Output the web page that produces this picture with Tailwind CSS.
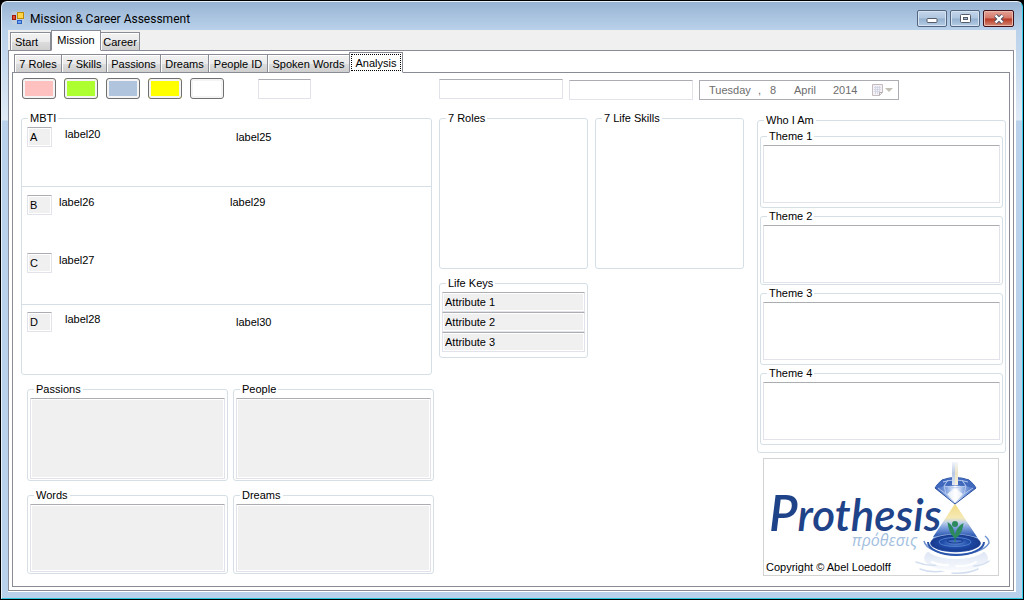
<!DOCTYPE html>
<html lang="en">
<head>
<meta charset="utf-8">
<title>Mission &amp; Career Assessment</title>
<script src="https://cdn.jsdelivr.net/npm/@tailwindcss/browser@4"></script>
</head>
<body class="bg-black font-['Liberation_Sans',sans-serif] text-[11px] leading-[14px] text-black">
<div class="min-h-screen flex flex-col p-px">
<div class="flex-1 flex flex-col rounded-t-[6px] border border-t-[#e8f1fa] border-l-[#e8f1fa] border-r-[#35d0ee] border-b-[#2cc4dc] bg-[linear-gradient(to_bottom,#98b4d3_0px,#b9d1ea_28px,#dfeaf6_118px,#b9d1ea_119px)] px-[6px] pb-[6px]">

  <header class="h-7 flex items-start pl-[3px] pr-[2px]">
    <svg class="mt-[9px] w-[14px] h-[14px]" viewBox="0 0 14 14" aria-hidden="true">
      <rect x="0.5" y="0.5" width="13" height="13" fill="#c9d2d8" opacity=".6"/>
      <rect x="6.5" y="1.5" width="6" height="6" fill="#ffd447" stroke="#c08a00"/>
      <rect x="1.5" y="4.5" width="3" height="4" fill="#e0502c" stroke="#a01808"/>
      <rect x="6.5" y="9.5" width="4" height="3" fill="#6ea6f5" stroke="#2a5fc4"/>
    </svg>
    <h1 class="ml-[5px] mt-[9px] flex-1 font-[Roboto,sans-serif] text-[12px] leading-4">Mission &amp; Career Assessment</h1>
    <div class="mt-2 flex gap-[3px]">
      <button aria-label="Minimize" class="w-[30px] h-[17px] rounded-[2px] border border-[#536580] bg-[linear-gradient(to_bottom,#c3d6ea_0%,#afc6df_48%,#93b0cf_52%,#b5cde6_100%)] shadow-[inset_0_0_0_1px_#d6e4f2] flex items-center justify-center">
        <svg width="12" height="11" viewBox="0 0 12 11"><rect x="1" y="5.5" width="10" height="4" rx="1" fill="#fff" stroke="#555b68"/></svg>
      </button>
      <button aria-label="Maximize" class="w-[30px] h-[17px] rounded-[2px] border border-[#536580] bg-[linear-gradient(to_bottom,#c3d6ea_0%,#afc6df_48%,#93b0cf_52%,#b5cde6_100%)] shadow-[inset_0_0_0_1px_#d6e4f2] flex items-center justify-center">
        <svg width="11" height="9" viewBox="0 0 11 9"><rect x=".5" y=".5" width="10" height="8" rx="1" fill="#fff" stroke="#555b68"/><rect x="3.5" y="3.5" width="4" height="2" fill="#9fb8d4" stroke="#555b68"/></svg>
      </button>
      <button aria-label="Close" class="w-[31px] h-[17px] rounded-[2px] border border-[#43101a] bg-[linear-gradient(to_bottom,#e5a295_0%,#d4786a_48%,#b83622_52%,#d28a75_100%)] shadow-[inset_0_0_0_1px_#eab9ad] flex items-center justify-center">
        <svg width="12" height="10" viewBox="0 0 12 10"><path d="M2.5 1.5 L9.5 8.5 M9.5 1.5 L2.5 8.5" stroke="#4d5364" stroke-width="4.2"/><path d="M2.5 1.5 L9.5 8.5 M9.5 1.5 L2.5 8.5" stroke="#fff" stroke-width="2.4"/></svg>
      </button>
    </div>
  </header>

  <main class="flex-1 flex flex-col bg-[#f0f0f0]">
    <nav class="relative z-10 flex items-end pl-[2px] -mb-px h-[21px]" aria-label="Main sections">
      <button class="h-[19px] w-[41px] pr-2 border border-[#898c95] bg-[linear-gradient(to_bottom,#f2f2f2_0%,#ebebeb_50%,#dddddd_51%,#cfcfcf_100%)] shadow-[inset_1px_1px_0_#fff]">Start</button>
      <button class="h-[21px] w-[50px] pb-[2px] border border-[#898c95] border-b-white bg-white">Mission</button>
      <button class="h-[19px] w-[39px] border border-l-0 border-[#898c95] bg-[linear-gradient(to_bottom,#f2f2f2_0%,#ebebeb_50%,#dddddd_51%,#cfcfcf_100%)] shadow-[inset_1px_1px_0_#fff]">Career</button>
    </nav>

    <div class="flex-1 flex flex-col bg-white pr-[2px] pb-px">
    <div class="flex-1 flex flex-col border border-[#898c95] p-[3px] pt-px">
      <nav class="relative z-10 flex items-end pl-[2px] -mb-px h-[21px]" aria-label="Mission pages">
        <button class="h-[19px] w-12 border border-[#898c95] bg-[linear-gradient(to_bottom,#f2f2f2_0%,#ebebeb_50%,#dddddd_51%,#cfcfcf_100%)] shadow-[inset_1px_1px_0_#fff]">7 Roles</button>
        <button class="h-[19px] w-[45px] border border-l-0 border-[#898c95] bg-[linear-gradient(to_bottom,#f2f2f2_0%,#ebebeb_50%,#dddddd_51%,#cfcfcf_100%)] shadow-[inset_1px_1px_0_#fff]">7 Skills</button>
        <button class="h-[19px] w-[54px] border border-l-0 border-[#898c95] bg-[linear-gradient(to_bottom,#f2f2f2_0%,#ebebeb_50%,#dddddd_51%,#cfcfcf_100%)] shadow-[inset_1px_1px_0_#fff]">Passions</button>
        <button class="h-[19px] w-12 border border-l-0 border-[#898c95] bg-[linear-gradient(to_bottom,#f2f2f2_0%,#ebebeb_50%,#dddddd_51%,#cfcfcf_100%)] shadow-[inset_1px_1px_0_#fff]">Dreams</button>
        <button class="h-[19px] w-[59px] border border-l-0 border-[#898c95] bg-[linear-gradient(to_bottom,#f2f2f2_0%,#ebebeb_50%,#dddddd_51%,#cfcfcf_100%)] shadow-[inset_1px_1px_0_#fff]">People ID</button>
        <button class="h-[19px] w-[81px] border border-x-0 border-[#898c95] bg-[linear-gradient(to_bottom,#f2f2f2_0%,#ebebeb_50%,#dddddd_51%,#cfcfcf_100%)] shadow-[inset_1px_1px_0_#fff]">Spoken Words</button>
        <button class="h-[21px] w-[54px] p-px border border-[#898c95] border-b-white bg-white"><span class="block h-[17px] leading-[16px] border border-dotted border-black">Analysis</span></button>
      </nav>

      <section class="flex-1 border border-[#898c95] bg-white pl-2 pr-[3px] pt-[5px] pb-[10px]">
        <div class="grid grid-cols-[413fr_567fr] gap-[5px]">
          <div class="flex items-start gap-2 pl-px">
            <button aria-label="Pink" class="w-[34px] h-[21px] rounded-[3px] border border-[#707070] bg-[#ffc0c0] shadow-[inset_0_0_0_2px_#f4f4f4]"></button>
            <button aria-label="Green" class="w-[34px] h-[21px] rounded-[3px] border border-[#707070] bg-[#adff2f] shadow-[inset_0_0_0_2px_#f4f4f4]"></button>
            <button aria-label="Blue" class="w-[34px] h-[21px] rounded-[3px] border border-[#707070] bg-[#b0c4de] shadow-[inset_0_0_0_2px_#f4f4f4]"></button>
            <button aria-label="Yellow" class="w-[34px] h-[21px] rounded-[3px] border border-[#707070] bg-[#ffff00] shadow-[inset_0_0_0_2px_#f4f4f4]"></button>
            <button aria-label="White" class="w-[34px] h-[21px] rounded-[3px] border border-[#707070] bg-white shadow-[inset_0_0_0_2px_#f4f4f4]"></button>
            <input type="text" aria-label="Code" class="mt-px ml-[26px] w-[53px] h-5 px-[2px] rounded-[1px] border border-[#e2e3ea] border-t-[#abadb3] bg-white">
          </div>
          <div class="flex items-start gap-[6px] pt-px">
            <input type="text" aria-label="First name" class="w-[124px] h-5 px-[2px] rounded-[1px] border border-[#e2e3ea] border-t-[#abadb3] bg-white">
            <input type="text" aria-label="Last name" class="mt-px w-[124px] h-5 px-[2px] rounded-[1px] border border-[#e2e3ea] border-t-[#abadb3] bg-white">
            <button disabled aria-label="Date" class="mt-px w-[200px] h-5 flex items-center border border-[#abadb3] bg-white pl-[9px] pr-[5px] text-left text-[#6d6d6d]">
              <span class="w-[49px]">Tuesday</span><span class="w-3">,</span><span class="w-6">8</span><span class="w-[39px]">April</span><span class="flex-1">2014</span>
              <svg width="21" height="12" viewBox="0 0 21 12" aria-hidden="true"><path d="M.5.5h10v8l-3 3h-7z" fill="#f3f1f3" stroke="#c4bcc0"/><path d="M2 3.5h7M2 5.5h7M2 7.5h6M3.5 2v8M5.5 2v8M7.5 2v7" stroke="#cfd3e2" stroke-width=".8"/><path d="M10.500 8.500h-3v3" fill="none" stroke="#b5adb0"/><path d="M13 4h8l-4 4z" fill="#c2bfb5"/></svg>
            </button>
          </div>
        </div>

        <div class="mt-3 grid grid-cols-[413fr_313fr_249fr] gap-[5px] items-start">
          <div class="flex flex-col gap-2 min-w-0">
            <fieldset class="mr-[2px] rounded-[3px] border border-[#d5dfe5]">
              <legend class="ml-[6px] px-[2px] leading-[13px]">MBTI</legend>
              <div class="h-[62px] flex items-start pl-[5px] pt-[2px] border-b border-[#d5dfe5]">
                <input id="a" readonly value="A" class="w-[25px] h-5 px-[2px] rounded-[1px] border border-[#e2e3ea] border-t-[#abadb3] bg-[#f0f0f0] shadow-[inset_0_0_0_1px_#fff]">
                <label for="a" class="ml-[13px] w-[171px]">label20</label><span class="mt-[3px]">label25</span>
              </div>
              <div class="h-[118px] flex flex-col gap-[38px] pl-[5px] pt-2 border-b border-[#d5dfe5]">
                <div class="flex items-start">
                  <input id="b" readonly value="B" class="w-[25px] h-5 px-[2px] rounded-[1px] border border-[#e2e3ea] border-t-[#abadb3] bg-[#f0f0f0] shadow-[inset_0_0_0_1px_#fff]">
                  <label for="b" class="ml-[7px] w-[171px]">label26</label><span>label29</span>
                </div>
                <div class="flex items-start">
                  <input id="c" readonly value="C" class="w-[25px] h-5 px-[2px] rounded-[1px] border border-[#e2e3ea] border-t-[#abadb3] bg-[#f0f0f0] shadow-[inset_0_0_0_1px_#fff]">
                  <label for="c" class="ml-[7px] w-[171px]">label27</label>
                </div>
              </div>
              <div class="h-[69px] flex items-start pl-[5px] pt-[7px]">
                <input id="d" readonly value="D" class="w-[25px] h-5 px-[2px] rounded-[1px] border border-[#e2e3ea] border-t-[#abadb3] bg-[#f0f0f0] shadow-[inset_0_0_0_1px_#fff]">
                <label for="d" class="ml-[13px] w-[171px]">label28</label><span class="mt-[3px]">label30</span>
              </div>
            </fieldset>
            <div class="grid grid-cols-2 gap-x-[5px] gap-y-2 pl-[6px]">
              <fieldset class="min-w-0 rounded-[3px] border border-[#d5dfe5] px-[2px] pb-px">
                <legend class="ml-1 px-[2px] leading-[13px]">Passions</legend>
                <textarea readonly aria-label="Passions" class="block mt-[2px] w-full h-[81px] resize-none rounded-[1px] border border-[#e2e3ea] border-t-[#abadb3] bg-[#f0f0f0] shadow-[inset_0_0_0_1px_#fff]"></textarea>
              </fieldset>
              <fieldset class="min-w-0 rounded-[3px] border border-[#d5dfe5] px-[2px] pb-px">
                <legend class="ml-1 px-[2px] leading-[13px]">People</legend>
                <textarea readonly aria-label="People" class="block mt-[2px] w-full h-[81px] resize-none rounded-[1px] border border-[#e2e3ea] border-t-[#abadb3] bg-[#f0f0f0] shadow-[inset_0_0_0_1px_#fff]"></textarea>
              </fieldset>
              <fieldset class="min-w-0 rounded-[3px] border border-[#d5dfe5] px-[2px] pb-px">
                <legend class="ml-1 px-[2px] leading-[13px]">Words</legend>
                <textarea readonly aria-label="Words" class="block mt-[2px] w-full h-[68px] resize-none rounded-[1px] border border-[#e2e3ea] border-t-[#abadb3] bg-[#f0f0f0] shadow-[inset_0_0_0_1px_#fff]"></textarea>
              </fieldset>
              <fieldset class="min-w-0 rounded-[3px] border border-[#d5dfe5] px-[2px] pb-px">
                <legend class="ml-1 px-[2px] leading-[13px]">Dreams</legend>
                <textarea readonly aria-label="Dreams" class="block mt-[2px] w-full h-[68px] resize-none rounded-[1px] border border-[#e2e3ea] border-t-[#abadb3] bg-[#f0f0f0] shadow-[inset_0_0_0_1px_#fff]"></textarea>
              </fieldset>
            </div>
          </div>

          <div class="grid grid-cols-2 gap-x-[7px] gap-y-2 pr-2 min-w-0">
            <fieldset class="min-w-0 h-[157px] rounded-[3px] border border-[#d5dfe5]"><legend class="ml-[6px] px-[2px] leading-[13px]">7 Roles</legend></fieldset>
            <fieldset class="min-w-0 h-[157px] rounded-[3px] border border-[#d5dfe5]"><legend class="ml-[6px] px-[2px] leading-[13px]">7 Life Skills</legend></fieldset>
            <fieldset class="min-w-0 rounded-[3px] border border-[#d5dfe5] px-[2px] pt-[2px] pb-[5px]">
              <legend class="ml-1 px-[2px] leading-[13px]">Life Keys</legend>
              <input readonly aria-label="Life key 1" value="Attribute 1" class="block w-full h-5 px-[2px] rounded-[1px] border border-[#e2e3ea] border-t-[#abadb3] bg-[#f0f0f0] shadow-[inset_0_0_0_1px_#fff]">
              <input readonly aria-label="Life key 2" value="Attribute 2" class="block w-full h-5 px-[2px] rounded-[1px] border border-[#e2e3ea] border-t-[#abadb3] bg-[#f0f0f0] shadow-[inset_0_0_0_1px_#fff]">
              <input readonly aria-label="Life key 3" value="Attribute 3" class="block w-full h-5 px-[2px] rounded-[1px] border border-[#e2e3ea] border-t-[#abadb3] bg-[#f0f0f0] shadow-[inset_0_0_0_1px_#fff]">
            </fieldset>
          </div>

          <div class="min-w-0 pt-[2px]">
            <fieldset class="min-w-0 rounded-[3px] border border-[#d5dfe5] px-[2px] pt-[3px] pb-[7px]">
              <legend class="ml-1 px-[2px] leading-[13px]">Who I Am</legend>
              <div class="flex flex-col gap-[2px]">
                <fieldset class="min-w-0 rounded-[3px] border border-[#d5dfe5] px-[2px] pb-1">
                  <legend class="ml-1 px-[2px] leading-[13px]">Theme 1</legend>
                  <textarea aria-label="Theme 1" class="block mt-[2px] w-full h-[58px] resize-none rounded-[1px] border border-[#e2e3ea] border-t-[#abadb3] bg-white"></textarea>
                </fieldset>
                <fieldset class="min-w-0 rounded-[3px] border border-[#d5dfe5] px-[2px] pb-px">
                  <legend class="ml-1 px-[2px] leading-[13px]">Theme 2</legend>
                  <textarea aria-label="Theme 2" class="block mt-[2px] w-full h-[58px] resize-none rounded-[1px] border border-[#e2e3ea] border-t-[#abadb3] bg-white"></textarea>
                </fieldset>
                <fieldset class="min-w-0 rounded-[3px] border border-[#d5dfe5] px-[2px] pb-1">
                  <legend class="ml-1 px-[2px] leading-[13px]">Theme 3</legend>
                  <textarea aria-label="Theme 3" class="block mt-[2px] w-full h-[58px] resize-none rounded-[1px] border border-[#e2e3ea] border-t-[#abadb3] bg-white"></textarea>
                </fieldset>
                <fieldset class="min-w-0 rounded-[3px] border border-[#d5dfe5] px-[2px] pb-1">
                  <legend class="ml-1 px-[2px] leading-[13px]">Theme 4</legend>
                  <textarea aria-label="Theme 4" class="block mt-[2px] w-full h-[58px] resize-none rounded-[1px] border border-[#e2e3ea] border-t-[#abadb3] bg-white"></textarea>
                </fieldset>
              </div>
            </fieldset>
            <div class="mt-[5px] ml-[6px] mr-[7px] border border-[#d3d3d3] relative">
              <svg class="block w-full h-[116px]" viewBox="0 0 234 116" role="img" aria-label="Prothesis logo">
                <defs>
                  <linearGradient id="beamL" x1="0" y1="0" x2="0" y2="1"><stop offset="0" stop-color="#f2f5fb"/><stop offset=".5" stop-color="#b7c8e6"/><stop offset="1" stop-color="#dfe7f5"/></linearGradient>
                  <linearGradient id="beamR" x1="0" y1="0" x2="0" y2="1"><stop offset="0" stop-color="#f2f5fb"/><stop offset=".5" stop-color="#ece3c2"/><stop offset="1" stop-color="#f6efdc"/></linearGradient>
                  <linearGradient id="cone" x1="0" y1="0" x2="0" y2="1"><stop offset="0" stop-color="#f3dc84"/><stop offset=".42" stop-color="#f5e9b4"/><stop offset=".55" stop-color="#c3d3ea"/><stop offset=".72" stop-color="#7d9fdc"/><stop offset="1" stop-color="#2450ae"/></linearGradient>
                  <linearGradient id="gem" x1="0" y1="0" x2="1" y2="0"><stop offset="0" stop-color="#2c55b5"/><stop offset=".3" stop-color="#8dabe3"/><stop offset=".5" stop-color="#ffffff"/><stop offset=".7" stop-color="#8dabe3"/><stop offset="1" stop-color="#2c55b5"/></linearGradient>
                  <radialGradient id="pool"><stop offset="0" stop-color="#5d8bd6"/><stop offset=".55" stop-color="#1e4aa8"/><stop offset="1" stop-color="#183a8c"/></radialGradient>
                  <linearGradient id="wave" x1="0" y1="0" x2="0" y2="1"><stop offset="0" stop-color="#c3d2ec"/><stop offset="1" stop-color="#f6f9fd"/></linearGradient>
                </defs>
                <text x="5" y="72" font-family="Lato, sans-serif" font-style="italic" font-weight="600" font-size="44" fill="#1f4389"><tspan font-size="50">P</tspan>rothesis</text>
                <text x="88" y="87" font-family="Open Sans, sans-serif" font-style="italic" font-size="16" fill="#a3c0e0">πρόθεσις</text>
                <ellipse cx="192" cy="99" rx="32" ry="13" fill="url(#wave)" opacity=".7"/>
                <g fill="none" stroke-linecap="round">
                  <path d="M152 103q10 4 20 3M156 110q10 4 24 2M188 114q16 1 26-4M210 107q10-1 15-5" stroke="#d3dff0" stroke-width="1.500"/>
                  <path d="M168 103q8 4 16 3M192 107q12 1 20-4M178 111q8 2 16 1" stroke="#fff" stroke-width="2"/>
                </g>
                <ellipse cx="192" cy="86" rx="32" ry="14" fill="#fff"/>
                <path d="M160 82a33 15 0 0 0 65 2q0-4-4-7" fill="none" stroke="#6f93cf" stroke-width="1.500"/>
                <path d="M164 83a28 13 0 0 0 56 0" fill="none" stroke="#2a55ac" stroke-width="2"/>
                <path d="M191 45 L217 84 A25 9 0 0 1 166 84 Z" fill="url(#cone)"/>
                <ellipse cx="191.500" cy="84" rx="25" ry="8.500" fill="url(#pool)"/>
                <path d="M191 45 L213 78 Q191 72 169 78 Z" fill="url(#cone)"/>
                <ellipse cx="191" cy="83" rx="16" ry="4.500" fill="none" stroke="#4f7dcb"/>
                <ellipse cx="191" cy="82" rx="8" ry="2" fill="none" stroke="#16378a"/>
                <path d="M171 29q2-4 7-8 13-5 27 0 5 4 7 8l-21 16z" fill="url(#gem)" stroke="#2b4f9f" stroke-width="1"/>
                <path d="M171 29q2-4 7-8 13-5 27 0 5 4 7 8-21-5-41 0z" fill="#4069bd"/>
                <path d="M179 23q12-4 25 0M174 29l8 6 9 9 9-9 9-6M182 35l-2-8 11 2 11-2-2 8M180 27l4-6M202 27l-4-6" fill="none" stroke="#b5c9ee" stroke-width="1"/>
                <path d="M183 35l8-6 8 6-8 9z" fill="#fff" opacity=".75"/>
                <rect x="188" y="3" width="3" height="23" fill="url(#beamL)"/>
                <rect x="191" y="3" width="3" height="23" fill="url(#beamR)"/>
                <circle cx="191" cy="65" r="3" fill="#2c8a5c"/>
                <path d="M190.500 79q-6-5-7-16 6 3 7.500 13 2-9 8.500-12-1 11-7.500 15z" fill="#2c8a5c"/>
                <path d="M191 77v6" stroke="#2c8a5c" stroke-width="1"/>
              </svg>
              <p class="absolute left-[2px] bottom-px">Copyright © Abel Loedolff</p>
            </div>
          </div>
        </div>
      </section>
    </div>
    </div>
  </main>
</div>
</div>
</body>
</html>
